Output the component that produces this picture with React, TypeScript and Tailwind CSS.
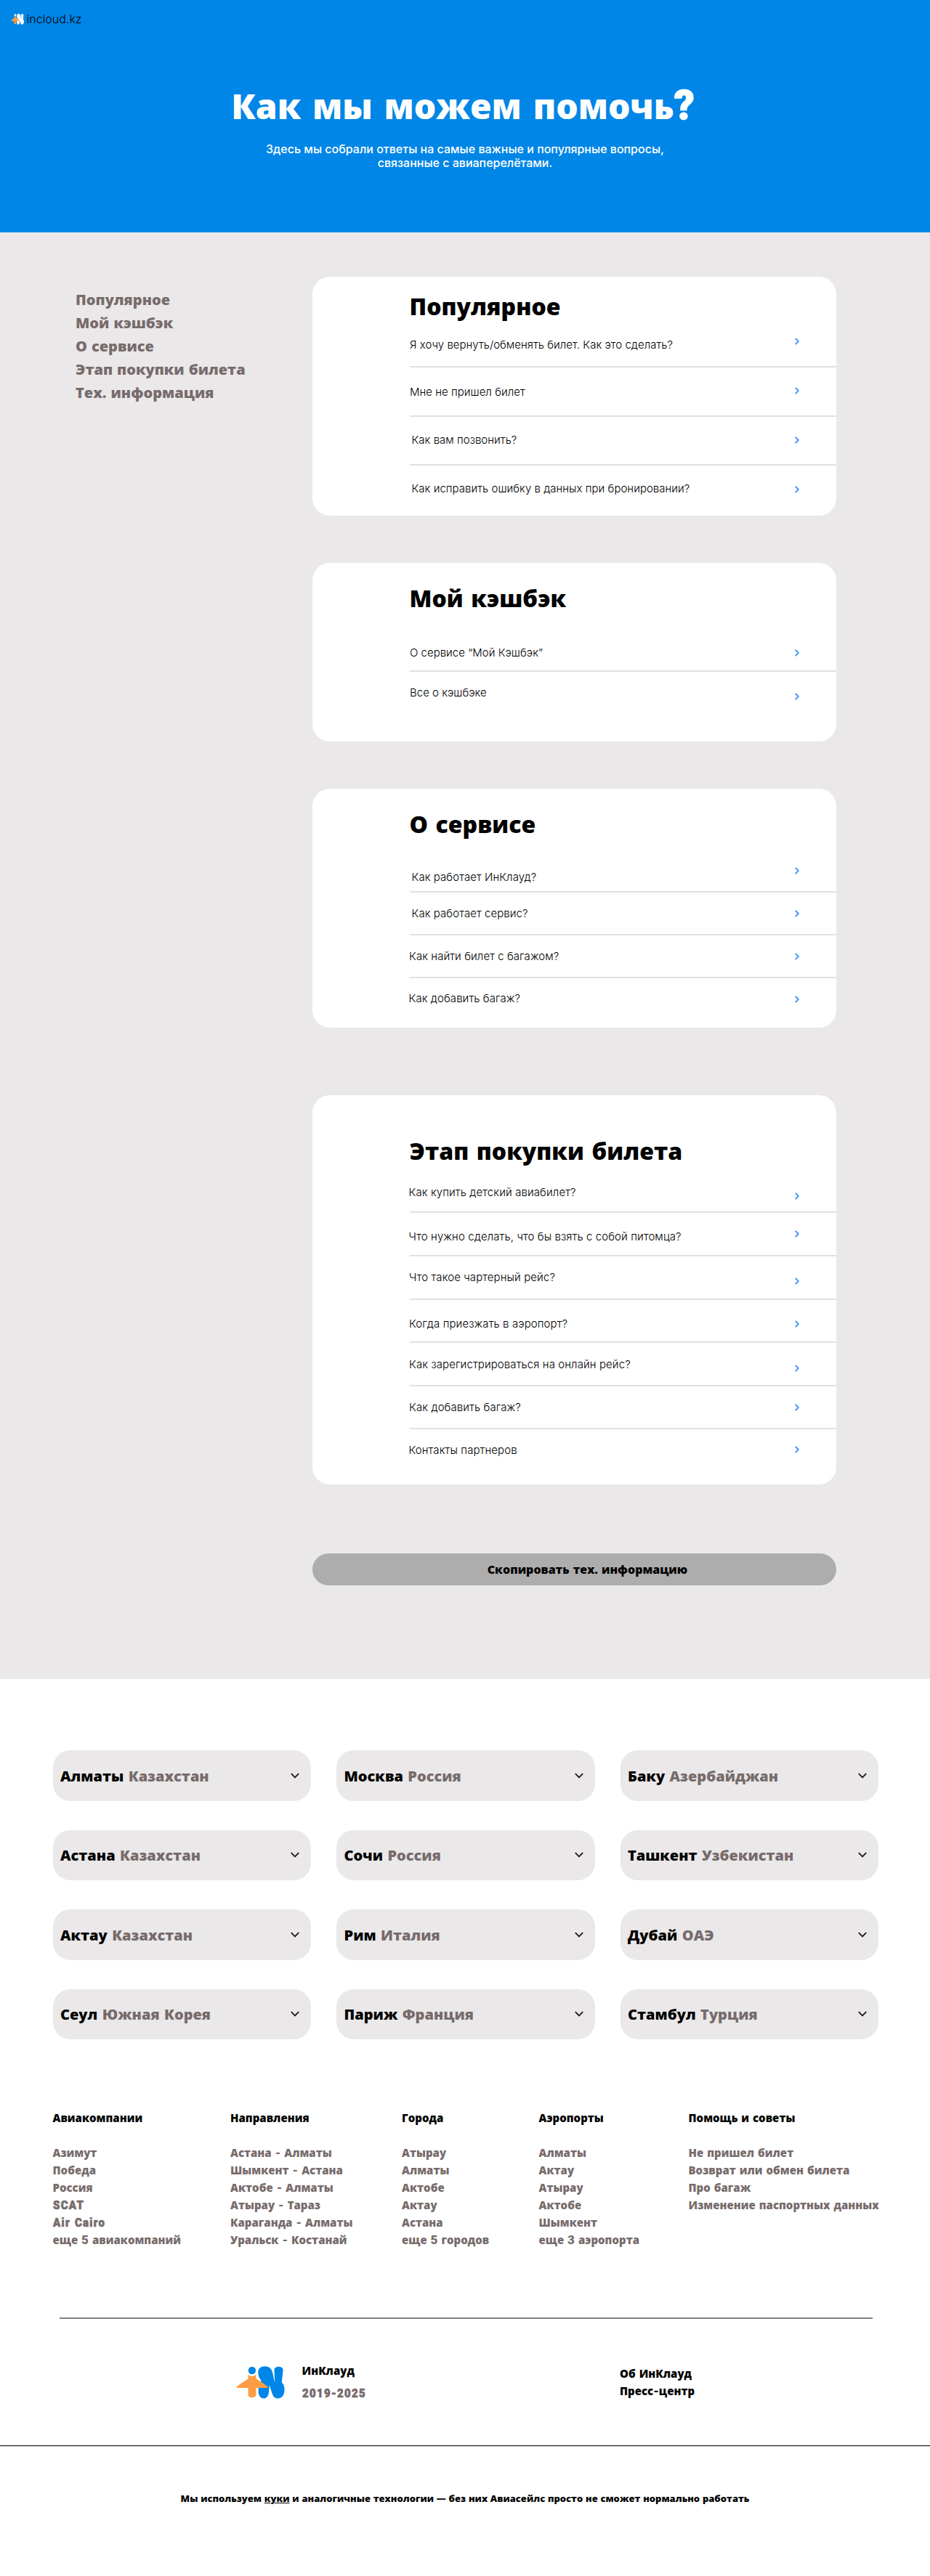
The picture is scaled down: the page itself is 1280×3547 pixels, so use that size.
import type { ReactNode } from "react";

type Item = { text: string; row: string; label: string; arrow: string };
type Section = { title: string; card: string; heading: string; tracking: string; items: Item[] };

const NAV = ["Популярное", "Мой кэшбэк", "О сервисе", "Этап покупки билета", "Тех. информация"];

const SECTIONS: Section[] = [
  {
    title: "Популярное",
    card: "pt-[19px]",
    heading: "h-[43px]",
    tracking: "tracking-[0.015px]",
    items: [
      { text: "Я хочу вернуть/обменять билет. Как это сделать?", row: "h-[63px]", label: "mt-[22px]", arrow: "mt-[22px]" },
      { text: "Мне не пришел билет", row: "h-[68px]", label: "mt-[24px]", arrow: "mt-[27px]" },
      { text: "Как вам позвонить?", row: "h-[67px]", label: "mt-[22px] ml-[2.5px]", arrow: "mt-[27px]" },
      { text: "Как исправить ошибку в данных при бронировании?", row: "h-[69px]", label: "mt-[22px] ml-[2.5px]", arrow: "mt-[28px]" },
    ],
  },
  {
    title: "Мой кэшбэк",
    card: "mt-[65px] pt-[27px]",
    heading: "h-[44px]",
    tracking: "tracking-normal",
    items: [
      { text: "О сервисе “Мой Кэшбэк”", row: "h-[79px]", label: "mt-[43px]", arrow: "mt-[48px]" },
      { text: "Все о кэшбэке", row: "h-[96px]", label: "mt-[19px]", arrow: "mt-[29px]" },
    ],
  },
  {
    title: "О сервисе",
    card: "mt-[65px] pt-[27px]",
    heading: "h-[44px]",
    tracking: "tracking-[0.06px]",
    items: [
      { text: "Как работает ИнКлауд?", row: "h-[72px]", label: "mt-[41px] ml-[2.5px]", arrow: "mt-[37px]" },
      { text: "Как работает сервис?", row: "h-[59px]", label: "mt-[19px] ml-[2.5px]", arrow: "mt-[24px]" },
      { text: "Как найти билет с багажом?", row: "h-[59px]", label: "mt-[19px] -ml-px", arrow: "mt-[24px]" },
      { text: "Как добавить багаж?", row: "h-[68px]", label: "mt-[18px] -ml-[1.5px]", arrow: "mt-[24px]" },
    ],
  },
  {
    title: "Этап покупки билета",
    card: "mt-[93px] pt-[55px]",
    heading: "h-[44px]",
    tracking: "tracking-[0.08px]",
    items: [
      { text: "Как купить детский авиабилет?", row: "h-[63px]", label: "mt-[25px] -ml-[1.5px]", arrow: "mt-[35px]" },
      { text: "Что нужно сделать, что бы взять с собой питомца?", row: "h-[60px]", label: "mt-[23px] -ml-[1.5px]", arrow: "mt-[24px]" },
      { text: "Что такое чартерный рейс?", row: "h-[60px]", label: "mt-[19px] -ml-px", arrow: "mt-[29px]" },
      { text: "Когда приезжать в аэропорт?", row: "h-[59px]", label: "mt-[23px] -ml-px", arrow: "mt-[28px]" },
      { text: "Как зарегистрироваться на онлайн рейс?", row: "h-[60px]", label: "mt-[20px] -ml-px", arrow: "mt-[30px]" },
      { text: "Как добавить багаж?", row: "h-[59px]", label: "mt-[19px] -ml-px", arrow: "mt-[24px]" },
      { text: "Контакты партнеров", row: "h-[76px]", label: "mt-[19px] -ml-[1.5px]", arrow: "mt-[23px]" },
    ],
  },
];

const CITIES: [string, string][] = [
  ["Алматы", "Казахстан"],
  ["Москва", "Россия"],
  ["Баку", "Азербайджан"],
  ["Астана", "Казахстан"],
  ["Сочи", "Россия"],
  ["Ташкент", "Узбекистан"],
  ["Актау", "Казахстан"],
  ["Рим", "Италия"],
  ["Дубай", "ОАЭ"],
  ["Сеул", "Южная Корея"],
  ["Париж", "Франция"],
  ["Стамбул", "Турция"],
];

/* Digits and hyphens set in the heavier grotesque face inside Open Sans text. */
function Heavy({ children }: { children: ReactNode }) {
  return <span className="font-['Roboto'] text-[17px] font-black">{children}</span>;
}

function Condensed({ children }: { children: ReactNode }) {
  return (
    <span className="inline-block origin-left scale-x-[0.88] font-['Roboto'] text-[17px] font-black tracking-[1.5px] whitespace-nowrap [-webkit-text-stroke:0.7px_currentColor]">
      {children}
    </span>
  );
}

function Route({ from, to }: { from: string; to: string }) {
  return (
    <>
      {from} <Heavy>-</Heavy> {to}
    </>
  );
}

const COLUMNS: { title: string; width: string; links: ReactNode[] }[] = [
  {
    title: "Авиакомпании",
    width: "w-[244.500px]",
    links: [
      "Азимут",
      "Победа",
      "Россия",
      <Condensed>SCAT</Condensed>,
      <Condensed>Air Cairo</Condensed>,
      <>еще <Heavy>5</Heavy> авиакомпаний</>,
    ],
  },
  {
    title: "Направления",
    width: "w-[236px]",
    links: [
      <Route from="Астана" to="Алматы" />,
      <Route from="Шымкент" to="Астана" />,
      <Route from="Актобе" to="Алматы" />,
      <Route from="Атырау" to="Тараз" />,
      <Route from="Караганда" to="Алматы" />,
      <Route from="Уральск" to="Костанай" />,
    ],
  },
  {
    title: "Города",
    width: "w-[188.500px]",
    links: ["Атырау", "Алматы", "Актобе", "Актау", "Астана", <>еще <Heavy>5</Heavy> городов</>],
  },
  {
    title: "Аэропорты",
    width: "w-[206px]",
    links: ["Алматы", "Актау", "Атырау", "Актобе", "Шымкент", <>еще <Heavy>3</Heavy> аэропорта</>],
  },
  {
    title: "Помощь и советы",
    width: "w-[280px]",
    links: ["Не пришел билет", "Возврат или обмен билета", "Про багаж", "Изменение паспортных данных"],
  },
];

function Logo({ className, letter }: { className: string; letter: string }) {
  return (
    <svg viewBox="0 0 67 45" preserveAspectRatio="none" className={className} aria-hidden="true">
      <path
        fill={letter}
        d="M39.5 .3C46 .3 49 4 50.3 9.5L52.9 21.5H53.3L52.4 5.5C52.3 -1 64.9 -1 64.6 5.5L62.8 22.5C66 25.5 66.8 29.5 66.5 34C66 41 62 44.5 57.5 44.5C53 44.5 50.5 41.5 49.3 37L45.8 26L45 36C44.5 42 41.5 44.5 38 44.5C33 44.5 30.7 40 30.6 34L31 27L34.5 20C31.5 16 30.2 12 30.3 8.5C30.5 3 34 .3 39.5 .3Z"
      />
      <ellipse cx="21.9" cy="6" rx="5.2" ry="5.3" fill={letter} />
      <path
        fill="#ff9d45"
        d="M16.5 11.5C19 14.8 25 14.8 27.5 11.5V17.5C33 20.5 39 24.5 43.3 28.3C44 29.2 43.6 29.9 42.6 29.9H27.5V39C27.5 44.8 16.5 44.8 16.5 39V29.9H1.3C.2 29.9 0 29.2 .8 28.4C5 24.5 11 21.5 16.5 17.5Z"
      />
    </svg>
  );
}

export default function App() {
  return (
    <div className="min-h-[3547px] w-[1280px] bg-white font-['Open_Sans','Noto_Sans',sans-serif] text-black">
      <header className="flex h-[320px] flex-col bg-[#0086e7] pt-[14px]">
        <div className="flex h-6 items-center gap-[3.5px] pl-[15px]">
          <Logo className="h-[15px] w-[18px]" letter="#ffffff" />
          <span className="font-['Inter'] text-base leading-6 font-light">incloud.kz</span>
        </div>
        <h1 className="mt-[71px] pr-[6px] text-center text-[48px] leading-[72px] font-extrabold text-white [word-spacing:0.07em]">
          Как мы можем помочь
          <span className="font-['Roboto'] text-[55px] font-black [-webkit-text-stroke:1.5px_currentColor]">?</span>
        </h1>
        <p className="mt-[14px] text-center font-['Inter'] text-base leading-[19.4px] font-medium text-white">
          Здесь мы собрали ответы на самые важные и популярные вопросы,
          <br />
          связанные с авиаперелётами.
        </p>
      </header>

      <main className="flex h-[1992px] items-start bg-[#eae8e9]">
        <nav className="mt-[77px] ml-[104px] flex w-[326px] flex-col text-[20px] leading-8 font-extrabold text-[#776b6b] [word-spacing:0.04em]">
          {NAV.map((n) => (
            <a key={n}>{n}</a>
          ))}
        </nav>
        <div className="mt-[61px] flex w-[721px] flex-col">
          {SECTIONS.map((s) => (
            <section key={s.title} className={`rounded-[24px] bg-white ${s.card}`}>
              <h2 className={`pl-[133.5px] text-[32px] leading-[44px] font-extrabold [word-spacing:0.07em] ${s.heading}`}>{s.title}</h2>
              <ul className={`ml-[134px] ${s.tracking}`}>
                {s.items.map((it) => (
                  <li
                    key={it.text}
                    className={`flex items-start justify-between border-b-2 border-[#e1e1e1] pr-[51px] last:border-b-0 ${it.row}`}
                  >
                    <span className={`font-['Inter'] text-[15px] leading-5 font-light whitespace-nowrap ${it.label}`}>{it.text}</span>
                    <svg viewBox="0 0 6 10" className={`h-[10px] w-[6px] shrink-0 ${it.arrow}`} fill="none" aria-hidden="true">
                      <path d="M.8 .8L4.8 5L.8 9.2" stroke="#2f8cff" strokeWidth="1.8" />
                    </svg>
                  </li>
                ))}
              </ul>
            </section>
          ))}
          <button className="mt-[95px] h-[44px] rounded-[24px] bg-[#adadad] pl-[36px] text-center text-base leading-6 font-extrabold [word-spacing:0.06em]">
            Скопировать тех. информацию
          </button>
        </div>
      </main>

      <section className="ml-[72.5px] grid w-[1136.5px] grid-cols-3 gap-x-[35px] gap-y-[40px] pt-[98px]">
        {CITIES.map(([city, country]) => (
          <div key={city} className="flex h-[69.5px] items-center justify-between rounded-[24px] bg-[#eae8e9] pr-[16px] pl-[10.5px]">
            <span className="pt-[1.5px] text-[20px] leading-7 font-extrabold whitespace-nowrap [word-spacing:0.06em]">
              {city} <span className="text-[#776b6b]">{country}</span>
            </span>
            <svg viewBox="0 0 12 8" className="h-2 w-3" fill="none" aria-hidden="true">
              <path d="M.8 1.2L6 6.4L11.2 1.2" stroke="#1d1b20" strokeWidth="1.9" />
            </svg>
          </div>
        ))}
      </section>

      <footer>
        <div className="mt-[96px] ml-[72.5px] flex h-[192px] text-[15px] leading-6 font-extrabold [word-spacing:0.07em]">
          {COLUMNS.map((c) => (
            <div key={c.title} className={`shrink-0 ${c.width}`}>
              <h3 className="mb-6">{c.title}</h3>
              <ul className="text-[#776b6b]">
                {c.links.map((l, i) => (
                  <li key={i} className="h-6 whitespace-nowrap">{l}</li>
                ))}
              </ul>
            </div>
          ))}
        </div>

        <div className="mt-[95px] ml-[82px] h-[2px] w-[1119px] bg-[#808080]" />

        <div className="flex h-[174px] items-start text-[15px] leading-6 font-extrabold">
          <Logo className="mt-[65px] ml-[324.5px] h-[45px] w-[67px]" letter="#0086e7" />
          <div className="mt-[59px] ml-[24px] w-[437.5px]">
            <p className="mb-[7px]">ИнКлауд</p>
            <p className="h-6 text-[#776b6b]"><Condensed>2019-2025</Condensed></p>
          </div>
          <div className="mt-[63px] [word-spacing:0.07em]">
            <p>Об ИнКлауд</p>
            <p>Пресс<Heavy>-</Heavy>центр</p>
          </div>
        </div>
        <div className="h-[2px] border-b border-[#cfcfcf] bg-[#1c1c1c]" />
        <p className="pt-[59px] text-center text-[13px] leading-6 font-extrabold [word-spacing:0.03em]">
          Мы используем <span className="underline">куки</span> и аналогичные технологии — без них Авиасейлс просто не сможет нормально работать
        </p>
      </footer>
    </div>
  );
}
